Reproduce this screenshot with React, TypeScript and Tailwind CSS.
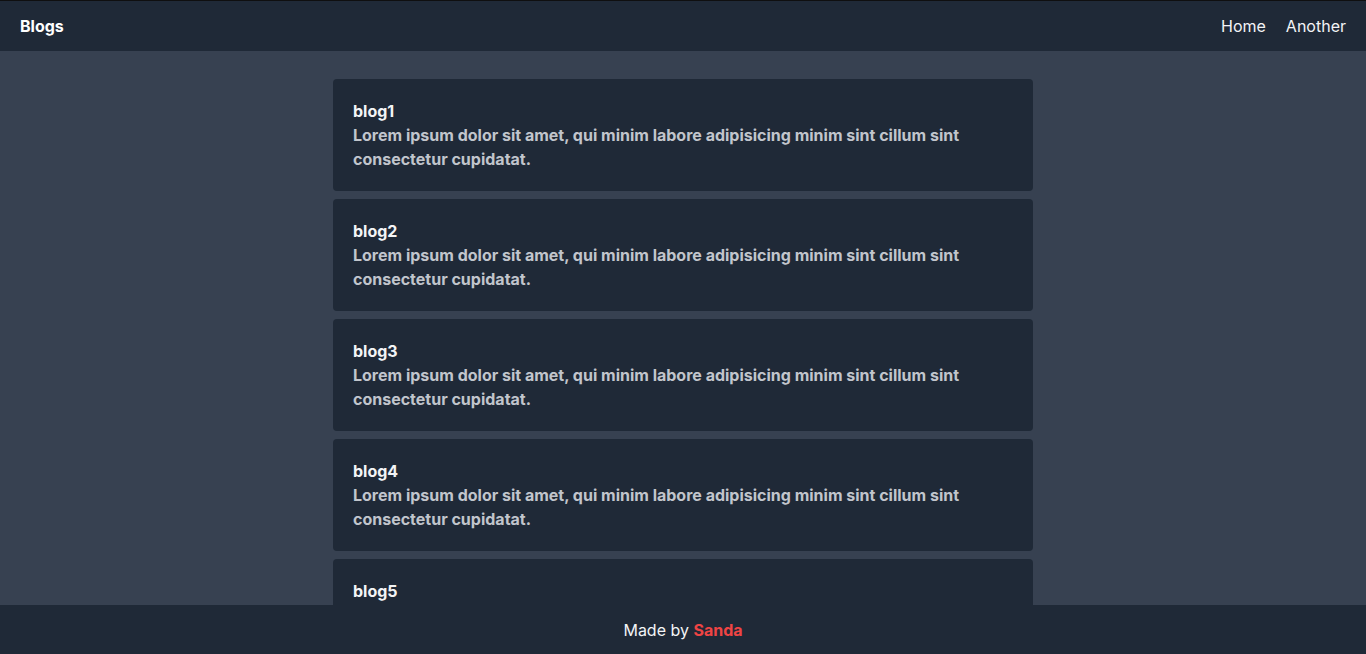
import React from 'react'

const lorem =
  'Lorem ipsum dolor sit amet, qui minim labore adipisicing minim sint cillum sint consectetur cupidatat.'

const blogs = [1, 2, 3, 4, 5, 6].map(n => ({ id: n, title: `blog${n}`, body: lorem }))

export default function App() {
  return (
    <div className="min-h-screen bg-[#374151] font-['Inter',sans-serif] text-base">
      <header className="h-[51px] border-t border-[#0f0f10] bg-[#1f2937] flex items-center justify-between px-5">
        <h1 className="text-white font-bold">Blogs</h1>
        <nav className="flex gap-5 text-gray-100">
          <a href="#">Home</a>
          <a href="#">Another</a>
        </nav>
      </header>
      <main className="pt-7 pb-16">
        <div className="w-[700px] mx-auto flex flex-col gap-2">
          {blogs.map(b => (
            <div key={b.id} className="bg-[#1f2937] rounded-[4px] p-5">
              <h2 className="text-gray-100 font-bold leading-6">{b.title}</h2>
              <p className="text-[#c1c5cc] font-bold leading-6">{b.body}</p>
            </div>
          ))}
        </div>
      </main>
      <footer className="fixed bottom-0 left-0 right-0 h-[49px] bg-[#1f2937] flex items-center justify-center text-gray-100">
        <span>
          Made by <span className="text-[#ef4444] font-bold">Sanda</span>
        </span>
      </footer>
    </div>
  )
}
